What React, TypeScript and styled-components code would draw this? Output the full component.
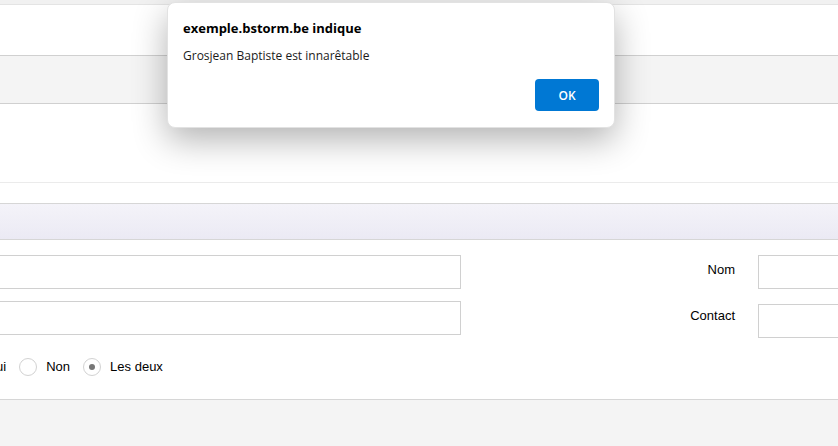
import styled, { createGlobalStyle } from 'styled-components';

const GlobalStyle = createGlobalStyle`
  html, body {
    margin: 0;
    padding: 0;
    background: #f4f4f4;
    overflow: hidden;
  }
  body {
    font-family: 'Liberation Sans', Arial, sans-serif;
    font-size: 13px;
    color: #000;
  }
`;

const Page = styled.div`
  position: relative;
  width: 838px;
  height: 446px;
  overflow: hidden;
  background: #f4f4f4;
`;

const TopStrip = styled.div`
  height: 4px;
  background: #f1f1f1;
  border-bottom: 1px solid #e4e4e4;
`;

const Band = styled.div<{ $h: number; $bg?: string; $line?: string }>`
  height: ${({ $h }) => $h}px;
  background: ${({ $bg }) => $bg || '#fff'};
  border-bottom: 1px solid ${({ $line }) => $line || '#d0d0d0'};
`;

const TitleBar = styled.div`
  height: 35px;
  background: linear-gradient(to bottom, #f4f3f9, #ebeaf4);
  border-bottom: 1px solid #d6d6d6;
`;

const FormSection = styled.div`
  height: 160px;
  background: #fff;
  border-bottom: 1px solid #d6d6d6;
  padding-top: 15px;
  box-sizing: border-box;
  overflow: hidden;
`;

const FormRow = styled.div<{ $mb: number }>`
  display: grid;
  grid-template-columns: 463px 297px 120px;
  align-items: start;
  margin-left: -2px;
  margin-bottom: ${({ $mb }) => $mb}px;
`;

const TextInput = styled.input<{ $shift?: number }>`
  box-sizing: border-box;
  width: 100%;
  height: 34px;
  border: 1px solid #d0d0d0;
  background: #fff;
  outline: none;
  margin-top: ${({ $shift }) => $shift || 0}px;
`;

const FieldLabel = styled.label`
  text-align: right;
  padding-right: 23px;
  line-height: 29px;
  color: #000;
`;

const RadioRow = styled.div`
  display: flex;
  align-items: center;
  margin-left: -14px;
  margin-top: 20px;
`;

const RadioOption = styled.label`
  display: flex;
  align-items: center;
  margin-right: 13px;
`;

const RadioText = styled.span`
  line-height: 18px;
`;

const RadioCircle = styled.span<{ $checked?: boolean }>`
  position: relative;
  box-sizing: border-box;
  width: 18px;
  height: 18px;
  border-radius: 50%;
  border: 1px solid #d2d2d2;
  background: #fff;
  margin-right: 9px;

  &::after {
    content: '';
    display: ${({ $checked }) => ($checked ? 'block' : 'none')};
    position: absolute;
    left: 5px;
    top: 5px;
    width: 6px;
    height: 6px;
    border-radius: 50%;
    background: #767676;
  }
`;

const Dialog = styled.div`
  position: absolute;
  left: 167px;
  top: 2px;
  width: 448px;
  height: 126px;
  box-sizing: border-box;
  background: #fff;
  border: 1px solid #e2e2e2;
  border-radius: 8px;
  box-shadow: 0 12px 34px rgba(0, 0, 0, 0.3);
  padding: 16px 15px 0 15px;
  font-family: 'Open Sans', 'Noto Sans', sans-serif;
  color: #1b1b1b;
`;

const DialogTitle = styled.div`
  font-weight: 700;
  font-size: 13px;
  color: #000;
  line-height: 18px;
`;

const DialogMessage = styled.div`
  font-size: 12px;
  margin-top: 10px;
  line-height: 17px;
`;

const DialogActions = styled.div`
  display: flex;
  justify-content: flex-end;
  margin-top: 15px;
`;

const OkButton = styled.button`
  width: 64px;
  height: 32px;
  border: none;
  border-radius: 4px;
  background: #0078d4;
  color: #fff;
  font-family: 'Open Sans', 'Noto Sans', sans-serif;
  font-weight: 600;
  font-size: 12px;
`;

export default function App() {
  return (
    <>
      <GlobalStyle />
      <Page>
        <TopStrip />
        <Band $h={50} />
        <Band $h={47} $bg="#f4f4f4" />
        <Band $h={78} $line="#ebebeb" />
        <Band $h={20} $line="#d6d6d6" />
        <TitleBar />
        <FormSection>
          <FormRow $mb={12}>
            <TextInput />
            <FieldLabel>Nom</FieldLabel>
            <TextInput />
          </FormRow>
          <FormRow $mb={0}>
            <TextInput />
            <FieldLabel>Contact</FieldLabel>
            <TextInput $shift={3} />
          </FormRow>
          <RadioRow>
            <RadioOption>
              <RadioText>Oui</RadioText>
            </RadioOption>
            <RadioOption>
              <RadioCircle />
              <RadioText>Non</RadioText>
            </RadioOption>
            <RadioOption>
              <RadioCircle $checked />
              <RadioText>Les deux</RadioText>
            </RadioOption>
          </RadioRow>
        </FormSection>
        <Dialog>
          <DialogTitle>exemple.bstorm.be indique</DialogTitle>
          <DialogMessage>Grosjean Baptiste est innarêtable</DialogMessage>
          <DialogActions>
            <OkButton>OK</OkButton>
          </DialogActions>
        </Dialog>
      </Page>
    </>
  );
}
